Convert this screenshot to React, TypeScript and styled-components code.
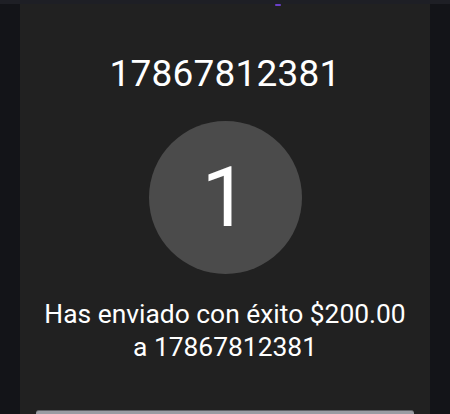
import React from 'react'
import styled, { createGlobalStyle } from 'styled-components'

const GlobalStyle = createGlobalStyle`
    html, body {
        margin: 0;
        padding: 0;
        background: #131418;
        font-family: Roboto, "Noto Sans", "Liberation Sans", sans-serif;
    }
`

const Screen = styled.div`
    width: 450px;
    height: 414px;
    display: flex;
    flex-direction: column;
    background: #131418;
    overflow: hidden;
`

const TopEdge = styled.div`
    height: 4px;
    flex-shrink: 0;
    background: #1e1f25;
`

const Body = styled.div`
    flex: 1;
    display: flex;
    justify-content: center;
`

const Panel = styled.div`
    width: 410px;
    background: #212121;
    display: flex;
    flex-direction: column;
    align-items: center;
`

const MarkerRow = styled.div`
    width: 100%;
    height: 3px;
    display: flex;
    padding-left: 255px;
    box-sizing: border-box;
`

const Marker = styled.div`
    width: 6px;
    height: 2px;
    border-radius: 1px;
    background: #6a3fc8;
`

const Phone = styled.div`
    margin-top: 45px;
    font-size: 37px;
    line-height: 44px;
    color: #ffffff;
    letter-spacing: 0.2px;
`

const Avatar = styled.div`
    margin-top: 25px;
    width: 153px;
    height: 153px;
    border-radius: 50%;
    background: #4b4b4b;
    display: flex;
    align-items: center;
    justify-content: center;
    color: #ffffff;
    font-size: 84px;
    line-height: 1;
`

const Message = styled.div`
    margin-top: 24px;
    font-size: 26.4px;
    line-height: 33px;
    color: #ffffff;
    text-align: center;
`

const Sheet = styled.div`
    margin-top: auto;
    width: 378px;
    height: 3px;
    background: #9a9ca3;
    border-top: 1px solid #5f6166;
    border-radius: 3px 3px 0 0;
`

const App: React.FC = () => {
    const phone = '17867812381'
    const amount = '$200.00'

    return (
        <>
            <GlobalStyle />
            <Screen>
                <TopEdge />
                <Body>
                    <Panel>
                        <MarkerRow>
                            <Marker />
                        </MarkerRow>
                        <Phone>{phone}</Phone>
                        <Avatar>1</Avatar>
                        <Message>
                            Has enviado con éxito {amount}
                            <br />
                            a {phone}
                        </Message>
                        <Sheet />
                    </Panel>
                </Body>
            </Screen>
        </>
    )
}

export default App
